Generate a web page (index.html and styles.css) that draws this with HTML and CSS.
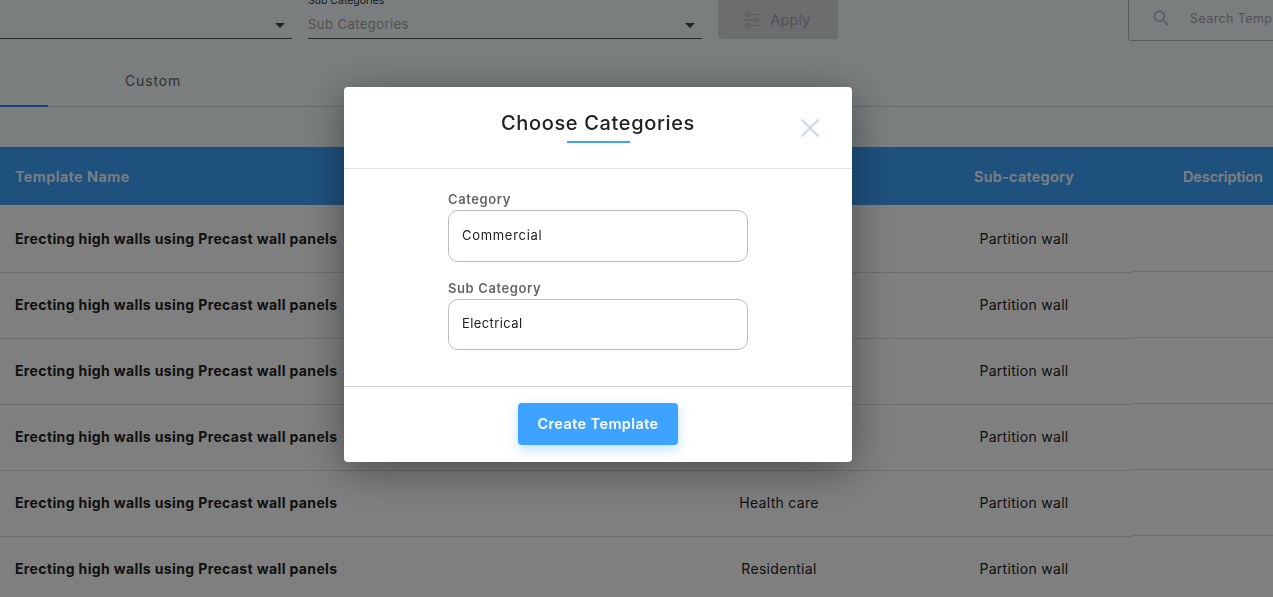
FILE: index.html
```html
<!DOCTYPE html>
<html lang="en">
<head>
<meta charset="utf-8">
<title>Choose Categories</title>
<link rel="stylesheet" href="styles.css">
</head>
<body>
<div class="page">
  <div class="toolbar">
    <div class="select select-main">
      <span class="select-value"></span>
      <span class="caret"></span>
    </div>
    <div class="select select-sub">
      <span class="select-label">Sub Categories</span>
      <span class="select-value">Sub Categories</span>
      <span class="caret"></span>
    </div>
    <div class="apply">
      <svg class="apply-icon" width="18" height="16" viewBox="0 0 18 16" fill="none" stroke="currentColor" stroke-width="1.2">
        <path d="M0 2.5h3.5M7 2.5h11M0 8h10.500M14 8h4M0 13.500h3.500M7 13.500h11"/>
        <circle cx="5.200" cy="2.500" r="1.700"/><circle cx="12.200" cy="8" r="1.700"/><circle cx="5.200" cy="13.500" r="1.700"/>
      </svg>
      <span>Apply</span>
    </div>
    <div class="search">
      <svg class="search-icon" width="16" height="16" viewBox="0 0 16 16" fill="none" stroke="currentColor" stroke-width="1.500">
        <circle cx="6.300" cy="6.300" r="5"/><path d="M10 10l5.200 5.200"/>
      </svg>
      <span class="search-text">Search Templates</span>
    </div>
  </div>
  <div class="tabs">
    <div class="tab tab-active"></div>
    <div class="tab">Custom</div>
  </div>
  <div class="table">
    <div class="table-row table-head">
      <div class="cell cell-name">Template Name</div>
      <div class="cell cell-center"></div>
      <div class="cell cell-center">Sub-category</div>
      <div class="cell cell-desc">Description</div>
    </div>
    <div class="table-row body-row">
      <div class="cell cell-name">Erecting high walls using Precast wall panels</div>
      <div class="cell cell-center">Commercial</div>
      <div class="cell cell-center">Partition wall</div>
      <div class="cell cell-desc"></div>
    </div>
    <div class="table-row body-row">
      <div class="cell cell-name">Erecting high walls using Precast wall panels</div>
      <div class="cell cell-center">Commercial</div>
      <div class="cell cell-center">Partition wall</div>
      <div class="cell cell-desc"></div>
    </div>
    <div class="table-row body-row">
      <div class="cell cell-name">Erecting high walls using Precast wall panels</div>
      <div class="cell cell-center">Commercial</div>
      <div class="cell cell-center">Partition wall</div>
      <div class="cell cell-desc"></div>
    </div>
    <div class="table-row body-row">
      <div class="cell cell-name">Erecting high walls using Precast wall panels</div>
      <div class="cell cell-center">Commercial</div>
      <div class="cell cell-center">Partition wall</div>
      <div class="cell cell-desc"></div>
    </div>
    <div class="table-row body-row">
      <div class="cell cell-name">Erecting high walls using Precast wall panels</div>
      <div class="cell cell-center">Health care</div>
      <div class="cell cell-center">Partition wall</div>
      <div class="cell cell-desc"></div>
    </div>
    <div class="table-row body-row">
      <div class="cell cell-name">Erecting high walls using Precast wall panels</div>
      <div class="cell cell-center">Residential</div>
      <div class="cell cell-center">Partition wall</div>
      <div class="cell cell-desc"></div>
    </div>
  </div>
</div>
<div class="backdrop"></div>
<div class="modal">
  <div class="modal-head">
    <h2 class="modal-title">Choose Categories</h2>
    <span class="title-rule"></span>
    <svg class="close" width="20" height="20" viewBox="0 0 20 20" fill="none" stroke="#c9d7e8" stroke-width="2.200">
      <path d="M1.500 1.500l17 17M18.500 1.500l-17 17"/>
    </svg>
  </div>
  <div class="modal-body">
    <div class="field">
      <label class="field-label">Category</label>
      <div class="field-input field-input-tall">Commercial</div>
    </div>
    <div class="field">
      <label class="field-label">Sub Category</label>
      <div class="field-input">Electrical</div>
    </div>
  </div>
  <div class="modal-foot">
    <button class="create">Create Template</button>
  </div>
</div>
</body>
</html>
```
FILE: styles.css
```css
* { box-sizing: border-box; }
html, body { margin: 0; height: 100%; overflow: hidden; }
body {
  font-family: "Inter", "Liberation Sans", sans-serif;
  font-size: 14px;
  color: #222;
  background: #f6fcff;
}
.page { width: 1273px; height: 597px; overflow: hidden; }

.toolbar { display: flex; align-items: flex-start; gap: 16px; height: 41px; }
.select {
  position: relative;
  flex: none;
  height: 39px;
  display: flex;
  flex-direction: column;
  justify-content: flex-end;
  border-bottom: 1px solid #555;
  padding-bottom: 6px;
}
.select-main { width: 292px; }
.select-sub { width: 394px; }
.select-label { font-size: 10.500px; line-height: 12px; margin-bottom: 9px; color: #333; }
.select-value { font-size: 13px; line-height: 16px; color: #a4a4a4; letter-spacing: .45px; }
.caret {
  position: absolute;
  right: 7px;
  bottom: 10px;
  border-style: solid;
  border-width: 5px 5px 0;
  border-color: #444 transparent transparent;
}
.apply {
  flex: none;
  width: 120px;
  height: 39px;
  display: flex;
  align-items: center;
  justify-content: center;
  gap: 9px;
  padding-right: 2px;
  background: #d6dade;
  border-radius: 0 0 4px 4px;
  color: #b4b8bc;
  font-size: 14px;
  letter-spacing: .4px;
}
.apply span { color: #a0a2a4; }
.search {
  flex: none;
  margin-left: 274px;
  width: 220px;
  height: 41px;
  display: flex;
  align-items: center;
  gap: 21px;
  padding: 0 0 4px 24px;
  border: 1px solid #b4b8bc;
  border-top: 0;
  border-right: 0;
  border-radius: 0 0 0 4px;
  color: #adb3bf;
}
.search-text { font-size: 12.500px; color: #a0a4a8; white-space: nowrap; letter-spacing: .4px; }

.tabs { display: flex; height: 66px; border-bottom: 1px solid #d0d4d8; }
.tab { display: flex; align-items: center; justify-content: center; padding-top: 14px; font-size: 14px; color: #666; letter-spacing: .85px; }
.tab:first-child { flex: none; width: 48px; }
.tab:last-child { flex: none; margin-left: 77px; width: 56px; white-space: nowrap; }
.tab-active { border-bottom: 2px solid #2f8fe6; height: 66px; }

.table { margin-top: 40px; background: #fff; }
.table-row { display: grid; grid-template-columns: 642px 274px 216px 1fr; }
.table-head {
  height: 58px;
  background: #3ea2ff;
  color: #fff;
  font-size: 14.500px;
  font-weight: 600;
  letter-spacing: .25px;
  align-items: center;
}
.table-head .cell-name { letter-spacing: .4px; }
.table-head .cell-desc { letter-spacing: -.1px; }
.cell-name { padding-left: 15px; }
.cell-center { text-align: center; }
.cell-desc { padding-left: 51px; }
.body-row { height: 66px; }
.body-row:nth-child(2) { height: 68px; }
.body-row .cell {
  display: flex;
  align-items: center;
  border-bottom: 1px solid #dcdcdc;
  padding-bottom: 2px;
  letter-spacing: .3px;
}
.body-row:nth-child(2) .cell { padding-top: 2px; }
.body-row .cell-center { justify-content: center; }
.body-row .cell-name { font-weight: 700; color: #222; letter-spacing: .37px; }
.body-row .cell-desc { margin-bottom: 1px; }

.backdrop { position: fixed; inset: 0; background: rgba(0, 0, 0, .5); }
.modal {
  position: fixed;
  left: 344px;
  top: 87px;
  width: 508px;
  height: 375px;
  display: flex;
  flex-direction: column;
  background: #fff;
  border-radius: 4px;
  box-shadow: 0 8px 40px rgba(0, 0, 0, .4);
}
.modal-head {
  position: relative;
  height: 82px;
  flex: none;
  display: flex;
  flex-direction: column;
  align-items: center;
  border-bottom: 1px solid #e2e2e2;
}
.modal-title { margin: 22px 0 0; font-size: 20px; line-height: 28px; font-weight: 500; color: #222; letter-spacing: .64px; }
.title-rule { width: 63px; height: 2px; background: #3ea2ff; margin-top: 4px; }
.close { position: absolute; left: 456px; top: 31px; }
.modal-body { flex: 1; display: flex; flex-direction: column; padding: 21px 0 0 104px; }
.field { display: flex; flex-direction: column; width: 300px; }
.field + .field { margin-top: 17px; }
.field-label { font-size: 13px; line-height: 18px; font-weight: 600; color: #666; letter-spacing: .6px; margin-bottom: 2px; }
.field-input {
  height: 51px;
  display: flex;
  align-items: center;
  padding: 0 13px 3px;
  border: 1px solid #bdbdbd;
  border-radius: 10px;
  font-size: 13px;
  color: #222;
  letter-spacing: .4px;
}
.field-input-tall { height: 52px; padding-bottom: 2px; letter-spacing: .7px; }
.modal-foot {
  flex: none;
  height: 76px;
  display: flex;
  justify-content: center;
  padding-top: 16px;
  border-top: 1px solid #ccc;
}
.create {
  width: 160px;
  height: 42px;
  padding: 0 0 2px;
  border: 0;
  border-radius: 4px;
  background: #3ea2ff;
  color: #fff;
  font: 600 14.500px "Inter", "Liberation Sans", sans-serif;
  letter-spacing: .4px;
  box-shadow: 0 4px 12px rgba(62, 162, 255, .35);
}
```
